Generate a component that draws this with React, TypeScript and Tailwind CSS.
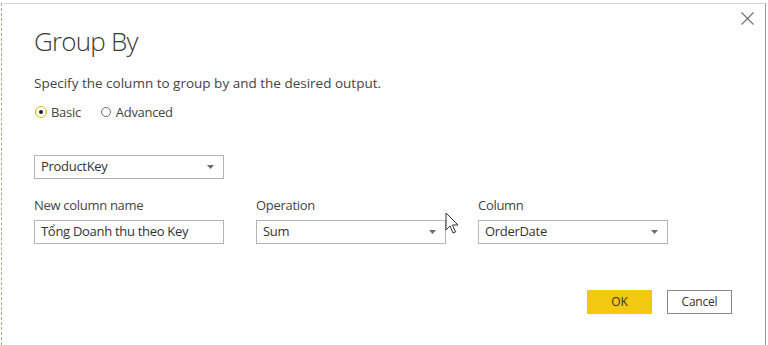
import React from 'react';

const font = { fontFamily: '"Open Sans", "Noto Sans", sans-serif' };

const Caret = () => (
  <svg width="7" height="4" viewBox="0 0 7 4" className="shrink-0">
    <path d="M0 0 L7 0 L3.5 4 Z" fill="#6b6b6b" />
  </svg>
);

const Select: React.FC<{ value: string }> = ({ value }) => (
  <div className="w-[190px] h-[24px] border border-[#b4b4b4] bg-white flex items-center justify-between pl-[6px] pr-[9px]">
    <span className="text-[13px] tracking-[-0.3px] text-[#333]">{value}</span>
    <Caret />
  </div>
);

const Field: React.FC<{ label: string; children: React.ReactNode }> = ({ label, children }) => (
  <div className="flex flex-col w-[222px]">
    <span className="text-[13px] tracking-[-0.3px] text-[#444] leading-[20px] mb-[5px]">{label}</span>
    {children}
  </div>
);

export default function App() {
  return (
    <div className="w-[768px] h-[345px] bg-white overflow-hidden flex pt-[3px] pl-[3px]" style={font}>
      <div className="w-[2px] h-full border-l border-dashed border-[#b9a58c] -ml-[2px] mr-[1px]" />
      <div className="relative w-[762px] h-[342px] bg-white border-t border-r border-[#d6d6d6] border-r-[#9a9a9a] pl-[30px] pt-[19px]">
        <button className="absolute right-[11px] top-[7px] w-[14px] h-[14px] flex items-center justify-center">
          <svg width="13" height="13" viewBox="0 0 13 13">
            <path d="M0.5 0.5 L12.5 12.5 M12.5 0.5 L0.5 12.5" stroke="#6f6f6f" strokeWidth="1.1" />
          </svg>
        </button>

        <h1 className="text-[26px] font-light tracking-[-0.8px] text-[#3a3a3a] leading-[36px]">Group By</h1>

        <p className="mt-[14px] text-[13.5px] text-[#444] leading-[20px]">
          Specify the column to group by and the desired output.
        </p>

        <div className="mt-[10px] flex items-center text-[13px] tracking-[-0.3px] text-[#444] leading-[18px]">
          <span className="w-[12px] h-[12px] rounded-full border-[1.5px] border-[#e8b400] flex items-center justify-center mr-[4px] ml-[1px]">
            <span className="w-[4px] h-[4px] rounded-full bg-[#222]" />
          </span>
          <span>Basic</span>
          <span className="w-[10px] h-[10px] rounded-full border border-[#6a6a6a] ml-[20px] mr-[5px]" />
          <span>Advanced</span>
        </div>

        <div className="mt-[34px]">
          <Select value="ProductKey" />
        </div>

        <div className="mt-[16px] flex">
          <Field label="New column name">
            <div className="w-[190px] h-[24px] border border-[#b4b4b4] bg-white flex items-center pl-[6px]">
              <span className="text-[13px] tracking-[-0.3px] text-[#333]">Tổng Doanh thu theo Key</span>
            </div>
          </Field>
          <Field label="Operation">
            <Select value="Sum" />
          </Field>
          <Field label="Column">
            <Select value="OrderDate" />
          </Field>
        </div>

        <div className="mt-[46px] flex justify-end pr-[33px] gap-[15px]">
          <button className="w-[65px] h-[24px] bg-[#f2c811] text-[12px] tracking-[-0.2px] text-[#333]">OK</button>
          <button className="w-[65px] h-[24px] border border-[#8a8a8a] bg-white text-[12px] tracking-[-0.2px] text-[#333]">Cancel</button>
        </div>

        <svg className="absolute left-[441px] top-[208px]" width="15" height="23" viewBox="0 0 15 23">
          <path d="M1 1 L1 18 L5 14 L8 21 L10.5 20 L7.5 13 L13 13 Z" fill="#fff" stroke="#333" strokeWidth="1" strokeLinejoin="round" />
        </svg>
      </div>
    </div>
  );
}
